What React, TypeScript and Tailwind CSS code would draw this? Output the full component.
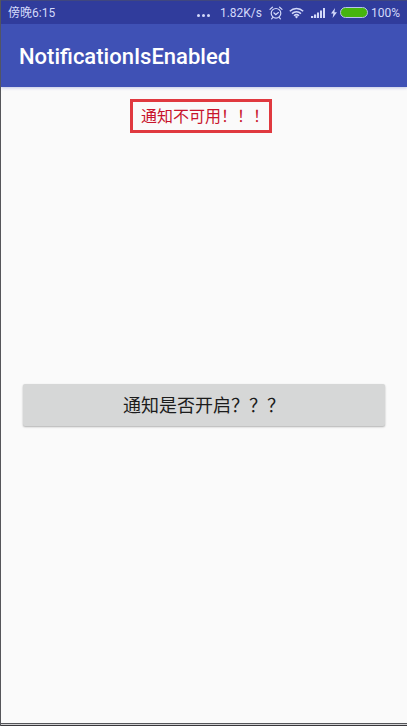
function AlarmIcon() {
  return (
    <svg viewBox="0 0 14 14" className="w-3.5 h-3.5" fill="none" stroke="currentColor" strokeLinecap="round">
      <circle cx="7" cy="7.3" r="4.8" strokeWidth="1.2" />
      <path d="M4.8 6.8 6.8 8.6 9.4 6.6M1 3.4 3.4 1.2M13 3.4l-2.4-2.2M3.6 11.6l-1 1.2M10.4 11.6l1 1.2" strokeWidth="1.2" />
    </svg>
  );
}

function WifiIcon() {
  return (
    <svg viewBox="0 0 15 12" className="w-[15px] h-3" fill="none" stroke="currentColor">
      <path d="M.8 4.3a9.6 9.6 0 0 1 13.4 0M3 6.6a6.5 6.5 0 0 1 9 0M5 8.8a3.7 3.7 0 0 1 5 0" strokeWidth="1.5" />
      <path d="M7.5 11.4 5.9 9.7a2.3 2.3 0 0 1 3.2 0z" fill="currentColor" stroke="none" />
    </svg>
  );
}

function SignalIcon() {
  return (
    <svg viewBox="0 0 15 10" className="w-[15px] h-2.5" fill="currentColor">
      <path d="M1 8h2.2v2H1zM4 6.5h2.2V10H4zM7 4.5h2V10H7zM10 2.5h2V10h-2zM13 0h2v10h-2z" />
    </svg>
  );
}

function BoltIcon() {
  return (
    <svg viewBox="0 0 6 10" className="w-1.5 h-2.5" fill="currentColor">
      <path d="M4 0 0 5.6h2.4L1.6 10 6 4.2H3.4z" />
    </svg>
  );
}

function StatusBar() {
  return (
    <div className="flex h-6 items-center justify-between border-t border-[#40477f] bg-[#303c9c] px-[7px] text-xs text-[#d3d9fa]">
      <span>傍晚6:15</span>
      <div className="flex items-center">
        <svg viewBox="0 0 13 3" className="w-[13px] h-[3px] mt-1.5 mr-2.5" fill="currentColor">
          <circle cx="1.5" cy="1.5" r="1.5" />
          <circle cx="6.5" cy="1.5" r="1.5" />
          <circle cx="11.5" cy="1.5" r="1.5" />
        </svg>
        <span className="mr-[7px]">1.82K/s</span>
        <AlarmIcon />
        <span className="mx-1.5">
          <WifiIcon />
        </span>
        <SignalIcon />
        <span className="ml-1.5 mr-[3px]">
          <BoltIcon />
        </span>
        <span className="w-7 h-[11px] rounded-full border border-[#b9c3ee] bg-[#46b50e] mr-[3px]" />
        <span>100%</span>
      </div>
    </div>
  );
}

export default function App() {
  return (
    <div className="flex min-h-screen flex-col border-l border-[#55565a] bg-[#fafafa] font-['Roboto','Noto_Sans_CJK_SC',sans-serif]">
      <StatusBar />
      <header className="flex h-[63px] items-center bg-[#3f51b5] px-[18px] pt-0.5 shadow-[0_1px_3px_rgba(63,81,181,0.3)]">
        <h1 className="text-[22px] leading-7 font-medium text-white">NotificationIsEnabled</h1>
      </header>

      <main className="grid flex-1 grid-rows-[1fr_auto_1fr] px-[22px]">
        <div className="flex items-start justify-center pt-3 pr-1.5">
          <p className="border-3 border-[#e0393f] pt-[3px] pb-px pl-2 text-base text-[#c8142c]">通知不可用！！！</p>
        </div>
        <button
          type="button"
          className="h-[42px] rounded-xs bg-[#d6d7d7] pt-0.5 text-lg text-[#1c1c1c] shadow-[0_1px_2px_rgba(0,0,0,0.3)]"
        >
          通知是否开启？？？
        </button>
      </main>

      <div className="h-[3px] border-y border-t-[#55565a] border-b-[#38383b] bg-[#d0d0d2]" />
    </div>
  );
}
